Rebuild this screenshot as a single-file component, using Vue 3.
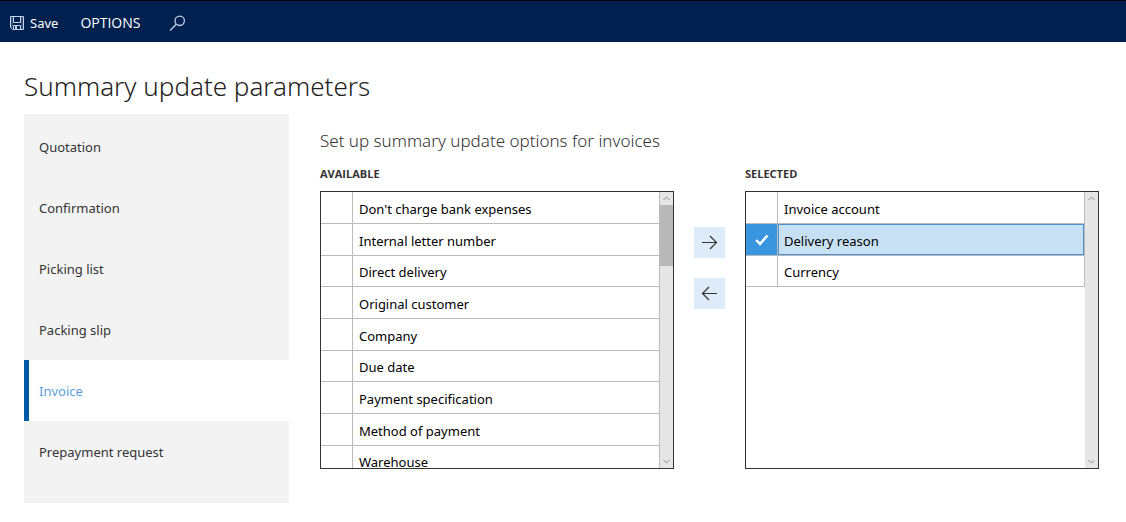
<script setup>
import { ref } from 'vue'

const tabs = ['Quotation', 'Confirmation', 'Picking list', 'Packing slip', 'Invoice', 'Prepayment request']
const activeTab = ref('Invoice')

const lists = [
  {
    id: 'available',
    label: 'AVAILABLE',
    thumb: true,
    rows: [
      "Don't charge bank expenses",
      'Internal letter number',
      'Direct delivery',
      'Original customer',
      'Company',
      'Due date',
      'Payment specification',
      'Method of payment',
      'Warehouse'
    ]
  },
  { id: 'selected', label: 'SELECTED', thumb: false, rows: ['Invoice account', 'Delivery reason', 'Currency'] }
]
const marked = ref('Delivery reason')
</script>

<template>
  <div class="page">
    <header class="bar">
      <button class="bar-btn save" type="button">
        <svg width="14" height="14" viewBox="0 0 14 14" fill="none" stroke="currentColor" aria-hidden="true">
          <path d="M.5 .5h13v13h-11l-2-2z M3.5 .5v6h7v-6 M3.5 13.5v-4h7v4" />
          <path d="M2 1v11 M12 1v12" opacity=".5" />
          <path d="M6 10v3.500" stroke-width="2" />
        </svg>
        <span>Save</span>
      </button>
      <button class="bar-btn options" type="button">OPTIONS</button>
      <button class="bar-btn search" type="button" aria-label="Search">
        <svg width="17" height="17" viewBox="0 0 17 17" fill="none" stroke="currentColor" stroke-width="1.300" aria-hidden="true">
          <circle cx="10.700" cy="5.800" r="4.700" />
          <path d="M7.300 9.300L1 15.500" />
        </svg>
      </button>
    </header>

    <main class="main">
      <h1 class="title">Summary update parameters</h1>
      <div class="body">
        <nav class="tabs">
          <a
            v-for="tab in tabs"
            :key="tab"
            href="#"
            class="tab"
            :class="{ active: tab === activeTab }"
            @click.prevent="activeTab = tab"
          >{{ tab }}</a>
        </nav>

        <section class="content">
          <h2 class="subtitle">Set up summary update options for invoices</h2>
          <div class="picker">
            <template v-for="(list, i) in lists" :key="list.id">
              <div v-if="i === 1" class="movers">
                <button class="move" type="button" aria-label="Add">
                  <svg width="17" height="15" viewBox="0 0 17 15" fill="none" stroke="currentColor" stroke-width="1.200" aria-hidden="true">
                    <path d="M1 7.500H15.500 M9 1L15.500 7.500L9 14" />
                  </svg>
                </button>
                <button class="move" type="button" aria-label="Remove">
                  <svg width="17" height="15" viewBox="0 0 17 15" fill="none" stroke="currentColor" stroke-width="1.200" aria-hidden="true">
                    <path d="M16 7.500H1.500 M8 1L1.500 7.500L8 14" />
                  </svg>
                </button>
              </div>
              <div class="list">
                <h3 :id="list.id" class="label">{{ list.label }}</h3>
                <div class="box">
                  <div class="rows">
                    <table class="table" :aria-labelledby="list.id">
                      <tbody>
                        <tr v-for="row in list.rows" :key="row" :class="{ marked: row === marked }" @click="marked = row">
                          <td class="check">
                            <svg v-if="row === marked" width="14" height="12" viewBox="0 0 14 12" fill="none" stroke="#fff" stroke-width="2.500" aria-hidden="true">
                              <path d="M1.200 6L5 10L12.500 1.500" />
                            </svg>
                          </td>
                          <td class="name">{{ row }}</td>
                        </tr>
                      </tbody>
                    </table>
                  </div>
                  <div class="scroll" aria-hidden="true">
                    <svg class="cap" width="7" height="5" viewBox="0 0 7 5" fill="none" stroke="currentColor">
                      <path d="M.5 4L3.500 1L6.500 4" />
                    </svg>
                    <div v-if="list.thumb" class="thumb"></div>
                    <svg class="cap end" width="7" height="5" viewBox="0 0 7 5" fill="none" stroke="currentColor">
                      <path d="M.5 1L3.500 4L6.500 1" />
                    </svg>
                  </div>
                </div>
              </div>
            </template>
          </div>
        </section>
      </div>
    </main>
  </div>
</template>

<style>
body {
  margin: 0;
  background: #fff;
}
</style>

<style scoped>
.page {
  font-family: "Noto Sans", "Open Sans", sans-serif;
  font-size: 13px;
  line-height: 20px;
  color: #222;
}
.page * {
  box-sizing: border-box;
}
button {
  font: inherit;
  color: inherit;
  border: 0;
  padding: 0;
  background: none;
  cursor: pointer;
}
.bar {
  display: flex;
  align-items: center;
  gap: 22px;
  height: 42px;
  padding: 3px 10px 0;
  border-top: 1px solid #000;
  background: #002050;
  color: #fff;
}
.bar-btn {
  display: flex;
  align-items: center;
}
.save {
  gap: 6px;
}
.options {
  font-family: "Open Sans", sans-serif;
  font-size: 14px;
}
.bar svg {
  color: #c3d2ea;
}
.search {
  margin-left: 7px;
}
.main {
  padding: 24px 27px 19px 24px;
}
.title {
  margin: 0;
  font-size: 26px;
  font-weight: 300;
  line-height: 40px;
}
.body {
  display: grid;
  grid-template-columns: 265px minmax(0, 1fr);
  gap: 31px;
  margin-top: 8px;
}
.tabs {
  padding: 2px 0 21px;
  background: #f3f3f3;
}
.tab {
  display: flex;
  align-items: center;
  height: 61px;
  padding: 0 10px;
  border-left: 5px solid transparent;
  color: #333;
  text-decoration: none;
}
.tab.active {
  border-left-color: #005ba5;
  background: #fff;
  color: #5b9fdc;
}
.content {
  padding-top: 14px;
}
.subtitle {
  margin: 0;
  font-size: 17px;
  font-weight: 300;
  line-height: 26px;
  color: #333;
}
.picker {
  display: grid;
  grid-template-columns: minmax(0, 1fr) 31px minmax(0, 1fr);
  gap: 20px;
}
.label {
  margin: 10px 0 7px;
  font-family: "Open Sans", sans-serif;
  font-size: 11px;
  font-weight: 700;
  line-height: 20px;
  color: #333;
}
.box {
  display: flex;
  height: 278px;
  border: 1px solid #333;
}
.rows {
  flex: 1;
  overflow: hidden;
}
.table {
  width: 100%;
  border-collapse: separate;
  border-spacing: 0;
  table-layout: fixed;
  color: #000;
}
.table td {
  height: 32px;
  padding: 2px 6px 0;
  border-right: 1px solid #bbb;
  border-bottom: 1px solid #bbb;
}
.table tr:nth-child(3n) td {
  height: 31px;
}
.table td.check {
  width: 32px;
  padding: 0;
  text-align: center;
}
.check svg {
  display: block;
  margin: auto;
}
.marked .check {
  background: #3996de;
}
.marked .name {
  background: #c7e0f4;
  box-shadow: inset 0 0 0 1px #4a90cb;
}
.scroll {
  display: flex;
  flex-direction: column;
  width: 13px;
  background: #e6e6e6;
  color: #888;
}
.cap {
  margin: 4px 3px;
}
.end {
  margin-top: auto;
}
.thumb {
  height: 61px;
  background: #b8b8b8;
}
.movers {
  display: flex;
  flex-direction: column;
  gap: 20px;
  padding-top: 73px;
}
.move {
  display: flex;
  align-items: center;
  justify-content: center;
  height: 31px;
  background: #deecf9;
  color: #333;
}
</style>
